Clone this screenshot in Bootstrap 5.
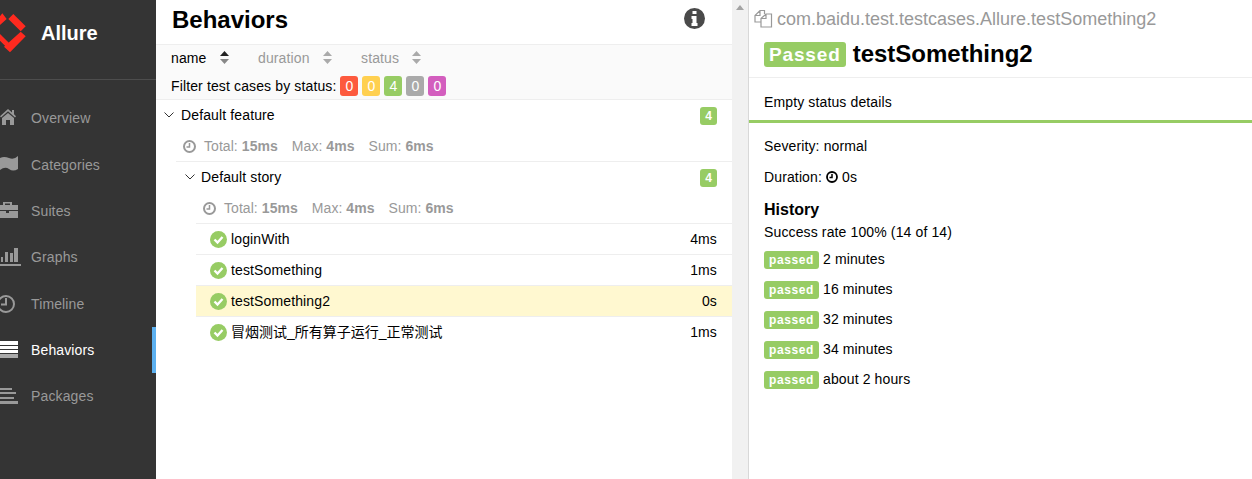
<!DOCTYPE html>
<html lang="en"><head><meta charset="utf-8">
<link rel="stylesheet" href="https://cdn.jsdelivr.net/npm/bootstrap@5.3.0/dist/css/bootstrap.min.css">
<style>
html,body{height:100%;overflow:hidden}
body{font-family:"Liberation Sans","Noto Sans CJK SC",sans-serif;font-size:14px;line-height:20px;color:#000;background:#fff;letter-spacing:.13px}
.app{height:479px;width:1252px}
.side{width:156px;background:#343434;overflow:hidden;flex:none}
.brand{height:80px;border-bottom:1px solid #4d4d4d;color:#fff;font-size:20px;font-weight:700;padding-bottom:14px;letter-spacing:0;gap:15px}
.menu{padding-top:15.3px}
.mi{height:46.3px;color:#999;gap:9px}
.mi.on{color:#fff;box-shadow:inset -4px 0 0 #5cb0ef}
.mid{width:576px;flex:none}
.head{height:45px;border-bottom:1px solid #eee;padding:0 27px 0 16px}
.head h2{font-size:24px;line-height:40px;font-weight:700;margin:0;letter-spacing:0}
.tools{height:55px;background:#fafafa;border-bottom:1px solid #eee;padding:0 15px}
.sortr{height:26px}
.sorti{color:#999}
.sorti.act{color:#000}
.wname{width:87px}.wdur{width:103px}
.arr{display:inline-block;margin-left:13px;vertical-align:-1px}
.flt{height:29px;gap:4px}
.pill{display:inline-block;width:18px;height:20px;border-radius:3px;color:#fff;text-align:center;line-height:20px;letter-spacing:0}
.g{background:#97cc64}.r{background:#fd5a3e}.y{background:#ffd050}.k{background:#aaa}.p{background:#d35ebe}
.grp{height:31px;padding-right:15px;padding-bottom:1px;gap:7px}
.grp svg{flex:none}
.cnt{width:17px;height:18px;margin-top:2px;border-radius:3px;color:#fff;font-size:12px;text-align:center;line-height:18px;font-weight:700;letter-spacing:0}
.stats{height:30px;color:#999;gap:14px;padding-left:27px;letter-spacing:.06px}
.tot{gap:8px}
.l1{padding-left:8px}
.l2{margin-left:20px;border-top:1px solid #eee}
.l2h{padding-left:9px;gap:6px}
.nodes{margin-left:20px}
.node{height:31px;border-top:1px solid #eee;padding:0 15px 0 14px;gap:4px}
.node.sel{background:#fff8d0}
.cjk{letter-spacing:-.01px}
.scrl{background:#f1f1f1;flex:none;border-right:1px solid #d8d8d8;width:17px}
.tri{width:0;height:0;border:4px solid transparent;border-bottom:5px solid #a3a3a3;border-top:0;margin:5px auto 0}
.right{flex:1 1 auto;min-width:0}
.path{height:37px;padding:0 0 0 5px;font-size:18px;color:#999;gap:4px;letter-spacing:0}
.ttl{height:41px;padding:0 0 6px 15px;gap:7px;border-bottom:1px solid #eee}
.ttl h3{font-size:24px;font-weight:700;margin:0;line-height:34px;letter-spacing:0}
.big{background:#97cc64;color:#fff;font-weight:700;border-radius:3px;height:25px;line-height:25px;padding:0 5px;letter-spacing:.85px;font-size:19px}
.stdet{height:45px;border-bottom:3px solid #97cc64;padding:5px 0 0 15px}
.body2{padding:13px 15px}
.pline{height:31px}
.hh{font-size:16px;font-weight:700;height:24px;line-height:24px;letter-spacing:0}
.rate{height:21px;line-height:21px;margin-bottom:6px}
.hr{height:30px;gap:4px}
.sm{background:#97cc64;color:#fff;font-size:12px;font-weight:700;border-radius:3px;height:18px;line-height:18px;margin-top:2px;padding:0 5px;letter-spacing:.6px}
</style></head><body>
<div class="app d-flex">
<div class="side">
 <div class="brand d-flex align-items-center">
  <svg width="26" height="40" viewBox="0 14 26 40"><path fill="#ff2a1f" d="M8.300 20 13.300 15 25.700 27.300 20.700 32.300ZM20.700 32.700 25.700 37.300 10 53.300 4 47.700ZM0 17.300 2.300 14.300 6.700 20 0 26ZM0 35 9.300 44.300 6 47.700 0 41.700Z"/></svg>
  <span>Allure</span></div>
 <div class="menu">
  <div class="mi d-flex align-items-center"><svg width="22" height="20" viewBox="0 0 22 20"><path fill="#999" d="M8 1 12 4.500V2H14V6.300L16 8.200 15 9.500 8 3.300 1 9.500 0 8.200ZM2 10 8 5 14 10V17H10V12H6V17H2Z"/></svg>Overview</div>
  <div class="mi d-flex align-items-center"><svg width="22" height="20" viewBox="0 0 22 20"><path fill="#999" d="M0 3Q4 1 9 3T18 1V14Q13 17 9 14T0 15Z"/></svg>Categories</div>
  <div class="mi d-flex align-items-center"><svg width="22" height="20" viewBox="0 0 22 20"><path fill="#999" d="M3 4V1H12V4H18V9H0V4ZM5 2.500V4H10V2.500ZM0 10H6V12H9V10H18V17H0Z"/></svg>Suites</div>
  <div class="mi d-flex align-items-center"><svg width="22" height="20" viewBox="0 0 22 20"><path fill="#999" d="M1 10H3V15H1ZM5 5H8V15H5ZM10 6H13V15H10ZM14 1H18V15H14ZM0 17H21V19H0Z"/></svg>Graphs</div>
  <div class="mi d-flex align-items-center"><svg width="22" height="20" viewBox="0 0 22 20"><circle cx="6" cy="10" r="8" fill="none" stroke="#999" stroke-width="2"/><path d="M6 4V10.500H1" fill="none" stroke="#999" stroke-width="2"/></svg>Timeline</div>
  <div class="mi on d-flex align-items-center"><svg width="22" height="20" viewBox="0 0 22 20"><path fill="#fff" d="M0 1H18V5H0ZM0 6H18V9H0ZM0 10H18V13H0Z"/><path fill="#aaa" d="M0 14H18V18H0Z"/></svg>Behaviors</div>
  <div class="mi d-flex align-items-center"><svg width="22" height="20" viewBox="0 0 22 20"><path fill="#999" d="M0 2H12V4H0ZM0 6H16V8H0ZM0 11H14V13H0ZM0 15H18V18H0Z"/></svg>Packages</div>
 </div>
</div>
<div class="mid">
 <div class="head d-flex justify-content-between align-items-start"><h2>Behaviors</h2>
 <svg class="mt-2" width="21" height="21" viewBox="0 0 21 21"><circle cx="10.500" cy="10.500" r="10.500" fill="#4a4a4a"/><path fill="#fff" d="M8.500 3H12.500V6H8.500ZM7.500 8H12.500V15H13.500V18H7.500V15H8.500V11H7.500Z"/></svg></div>
 <div class="tools">
  <div class="sortr d-flex align-items-center">
   <span class="sorti act wname">name<svg class="arr" width="9" height="13" viewBox="0 0 9 13"><path fill="#222" d="M4.500 0 9 5H0Z"/><path fill="#888" d="M4.500 13 9 8H0Z"/></svg></span>
   <span class="sorti wdur">duration<svg class="arr" width="9" height="13" viewBox="0 0 9 13"><path fill="#aaa" d="M4.500 0 9 5H0Z"/><path fill="#aaa" d="M4.500 13 9 8H0Z"/></svg></span>
   <span class="sorti">status<svg class="arr" width="9" height="13" viewBox="0 0 9 13"><path fill="#aaa" d="M4.500 0 9 5H0Z"/><path fill="#aaa" d="M4.500 13 9 8H0Z"/></svg></span>
  </div>
  <div class="flt d-flex align-items-center"><span>Filter test cases by status:</span>
   <span class="pill r">0</span><span class="pill y">0</span><span class="pill g">4</span><span class="pill k">0</span><span class="pill p">0</span></div>
 </div>
 <div class="grp d-flex align-items-center l1"><svg width="10" height="6" viewBox="0 0 10 6"><path d="M.5.500 5 5 9.500.500" fill="none" stroke="#333"/></svg><span class="flex-grow-1">Default feature</span><span class="cnt g">4</span></div>
 <div class="stats d-flex align-items-center"><span class="d-flex align-items-center tot"><svg width="13" height="13" viewBox="0 0 13 13"><circle cx="6.500" cy="6.500" r="5.500" fill="none" stroke="#999" stroke-width="2"/><path d="M6.500 3V7H3.500" fill="none" stroke="#999" stroke-width="1.500"/></svg><span>Total: <b>15ms</b></span></span><span>Max: <b>4ms</b></span><span>Sum: <b>6ms</b></span></div>
 <div class="l2">
  <div class="grp d-flex align-items-center l2h"><svg width="10" height="6" viewBox="0 0 10 6"><path d="M.5.500 5 5 9.500.500" fill="none" stroke="#333"/></svg><span class="flex-grow-1">Default story</span><span class="cnt g">4</span></div>
  <div class="stats d-flex align-items-center"><span class="d-flex align-items-center tot"><svg width="13" height="13" viewBox="0 0 13 13"><circle cx="6.500" cy="6.500" r="5.500" fill="none" stroke="#999" stroke-width="2"/><path d="M6.500 3V7H3.500" fill="none" stroke="#999" stroke-width="1.500"/></svg><span>Total: <b>15ms</b></span></span><span>Max: <b>4ms</b></span><span>Sum: <b>6ms</b></span></div>
  <div class="nodes">
   <div class="node d-flex align-items-center"><svg width="17" height="17" viewBox="0 0 17 17"><circle cx="8.500" cy="8.500" r="8.500" fill="#97cc64"/><path d="M4.500 8.500 7.500 11.500 12.500 6" fill="none" stroke="#fff" stroke-width="2.400"/></svg><span class="flex-grow-1">loginWith</span><span>4ms</span></div>
   <div class="node d-flex align-items-center"><svg width="17" height="17" viewBox="0 0 17 17"><circle cx="8.500" cy="8.500" r="8.500" fill="#97cc64"/><path d="M4.500 8.500 7.500 11.500 12.500 6" fill="none" stroke="#fff" stroke-width="2.400"/></svg><span class="flex-grow-1">testSomething</span><span>1ms</span></div>
   <div class="node sel d-flex align-items-center"><svg width="17" height="17" viewBox="0 0 17 17"><circle cx="8.500" cy="8.500" r="8.500" fill="#97cc64"/><path d="M4.500 8.500 7.500 11.500 12.500 6" fill="none" stroke="#fff" stroke-width="2.400"/></svg><span class="flex-grow-1">testSomething2</span><span>0s</span></div>
   <div class="node d-flex align-items-center"><svg width="17" height="17" viewBox="0 0 17 17"><circle cx="8.500" cy="8.500" r="8.500" fill="#97cc64"/><path d="M4.500 8.500 7.500 11.500 12.500 6" fill="none" stroke="#fff" stroke-width="2.400"/></svg><span class="flex-grow-1 cjk">冒烟测试_所有算子运行_正常测试</span><span>1ms</span></div>
  </div>
 </div>
</div>
<div class="scrl"><div class="tri"></div></div>
<div class="right">
 <div class="path d-flex align-items-center"><svg width="19" height="19" viewBox="0 0 19 19"><path d="M7 13H1V6.500L6 1.500H10.500V5M6 1.500V6.500H1M7 9.500 12 5H17.500V18H7ZM12 5V9.500H7" fill="none" stroke="#999" stroke-width="1.200"/></svg><span>com.baidu.test.testcases.Allure.testSomething2</span></div>
 <div class="ttl d-flex align-items-center"><span class="big">Passed</span><h3>testSomething2</h3></div>
 <div class="stdet d-flex align-items-center">Empty status details</div>
 <div class="body2">
  <div class="pline">Severity: normal</div>
  <div class="pline d-flex align-items-start gap-1">Duration: <svg class="mt-1" width="12" height="12" viewBox="0 0 12 12"><circle cx="6" cy="6" r="5" fill="none" stroke="#000" stroke-width="1.800"/><path d="M6 3V6.500H3.500" fill="none" stroke="#000" stroke-width="1.500"/></svg> 0s</div>
  <div class="hh">History</div>
  <div class="rate">Success rate 100% (14 of 14)</div>
  <div class="hr d-flex align-items-start"><span class="sm">passed</span> 2 minutes</div>
  <div class="hr d-flex align-items-start"><span class="sm">passed</span> 16 minutes</div>
  <div class="hr d-flex align-items-start"><span class="sm">passed</span> 32 minutes</div>
  <div class="hr d-flex align-items-start"><span class="sm">passed</span> 34 minutes</div>
  <div class="hr d-flex align-items-start"><span class="sm">passed</span> about 2 hours</div>
 </div>
</div>
</div>
<script src="https://cdn.jsdelivr.net/npm/bootstrap@5.3.0/dist/js/bootstrap.bundle.min.js"></script>
</body></html>
